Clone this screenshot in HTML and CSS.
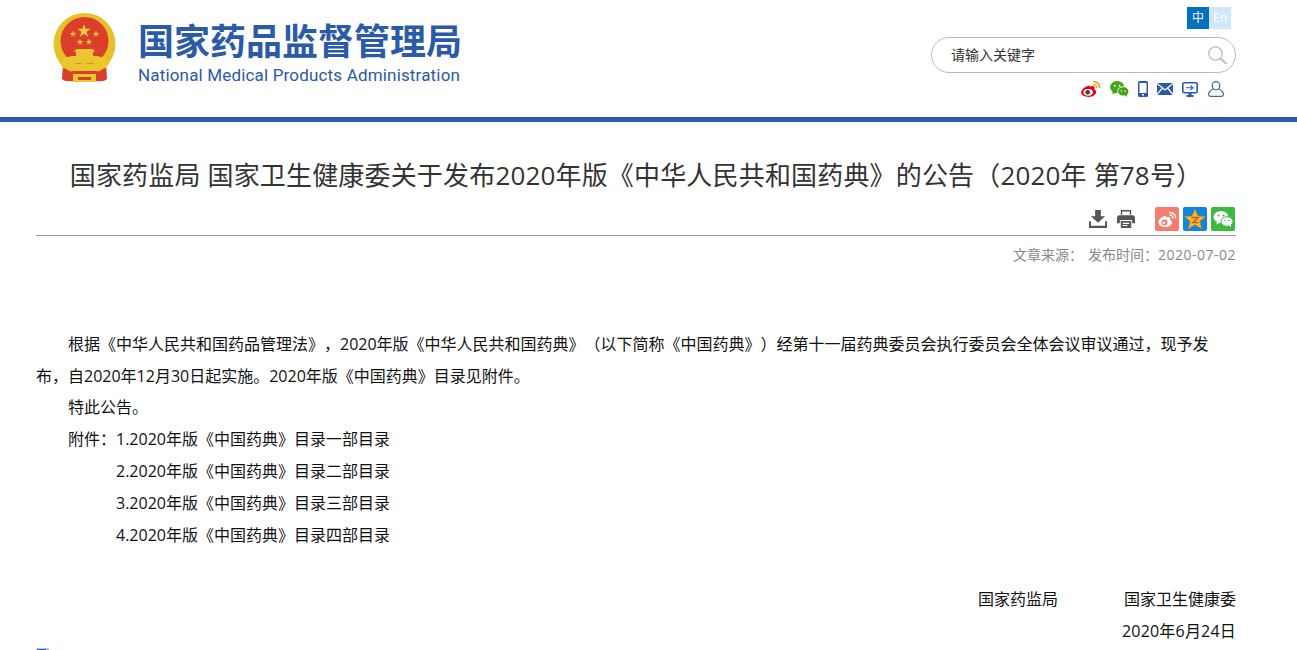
FILE: index.html
```html
<!DOCTYPE html>
<html lang="zh-CN">

<head>
    <meta charset="UTF-8">
    <title>国家药监局 国家卫生健康委关于发布2020年版《中华人民共和国药典》的公告</title>
    <link rel="stylesheet" href="styles.css">
</head>

<body>

    <header class="header">
        <div class="header-inner">
            <a class="logo" href="#">
                <svg class="emblem" width="63" height="69" viewBox="0 0 63 69">
                    <defs>
                        <polygon id="star" points="0,-1 .225,-.309 .951,-.309 .363,.118 .588,.809 0,.382 -.588,.809 -.363,.118 -.951,-.309 -.225,-.309" />
                    </defs>
                    <path d="M10 50 L9 66 Q12 69 20 68 H43 Q51 69 54 66 L53 50 Z" fill="#d8402c" />
                    <circle cx="31.500" cy="31" r="31" fill="#e6c12a" />
                    <circle cx="31.500" cy="28" r="24" fill="#db3f2b" />
                    <use href="#star" class="star" transform="translate(31 18) scale(7)" />
                    <use href="#star" class="star" transform="translate(20 21) scale(3.500)" />
                    <use href="#star" class="star" transform="translate(43 21) scale(3.500)" />
                    <use href="#star" class="star" transform="translate(27 29) scale(3.500)" />
                    <use href="#star" class="star" transform="translate(36 29) scale(3.500)" />
                    <path d="M23 36 H40 L42 39 H40 V43 H44 L53 45 V50 H10 V45 L19 43 H23 V39 H21 Z" fill="#ecc62e" />
                    <path d="M6 49 Q18 52 31.500 50 Q45 52 57 49 L53 55 Q42 58 31.500 56 Q21 58 10 55 Z" fill="#ecc62e" />
                    <path d="M14 56 Q24 52 31.500 54 Q39 52 49 56 L41 60 H22 Z" fill="#ecc62e" />
                    <path d="M12 60 L20 58 H43 L51 60 V68 H43 V62 H20 V68 H12 Z" fill="#d8402c" />
                    <rect x="20" y="61" width="23" height="8" fill="#ecc62e" />
                    <rect x="25" y="64" width="13" height="3" fill="#d8402c" />
                </svg>
                <div class="logo-text">
                    <div class="logo-cn">国家药品监督管理局</div>
                    <div class="logo-en">National Medical Products Administration</div>
                </div>
            </a>

            <div class="tools">
                <div class="lang">
                    <a class="lang-cn" href="#">中</a>
                    <a class="lang-en" href="#">En</a>
                </div>
                <div class="search">
                    <span class="search-text">请输入关键字</span>
                    <svg width="19" height="19" viewBox="0 0 19 19" fill="none" stroke="#bdbdbd">
                        <circle cx="7.500" cy="7.500" r="6.700" stroke-width="1.300" />
                        <path d="M12.500 12.500 L18.500 18" stroke-width="2" />
                    </svg>
                </div>
                <div class="quick-icons">
                    <svg width="20" height="16" viewBox="0 0 21 17">
                        <path d="M8 5 C3 6 0 10 0 12 C0 15 4 17 8 17 C13 17 16 14 16 11.500 C16 10 14.500 9.500 14 9 C15 7 14 5 11 5.500 L9 6 C9.500 4.500 9 4.500 8 5 Z" fill="#e60012" />
                        <ellipse cx="7.500" cy="12" rx="5" ry="3.600" fill="#fff" />
                        <circle cx="7" cy="12" r="2.500" fill="#444" />
                        <path d="M13 1 C17 0.500 20 3.500 19.500 7.500" fill="none" stroke="#e9a21d" stroke-width="1.800" />
                        <path d="M13 4 C15 3.700 17 5 16.500 7.500" fill="none" stroke="#e9a21d" stroke-width="1.500" />
                    </svg>
                    <svg width="19" height="16" viewBox="0 0 20 17">
                        <ellipse cx="7.500" cy="6.500" rx="7.500" ry="6.500" fill="#45a518" />
                        <path d="M3 10 L2.500 14 L7 12 Z" fill="#45a518" />
                        <ellipse cx="14" cy="11" rx="6" ry="5" fill="#45a518" stroke="#fff" stroke-width="1" />
                        <path d="M16 15 L18 17 L18 13 Z" fill="#45a518" />
                        <circle cx="5" cy="5" r="1" fill="#fff" />
                        <circle cx="10" cy="5" r="1" fill="#fff" />
                        <circle cx="12" cy="10.500" r="0.800" fill="#fff" />
                        <circle cx="16" cy="10.500" r="0.800" fill="#fff" />
                    </svg>
                    <svg width="10" height="16" viewBox="0 0 10 16">
                        <rect x="0" y="0" width="10" height="16" rx="1.500" fill="#2b5aa8" />
                        <rect x="1.500" y="2" width="7" height="10" fill="#fff" />
                        <rect x="4" y="13" width="2" height="1.500" fill="#fff" />
                    </svg>
                    <svg width="16" height="12" viewBox="0 0 16 12">
                        <rect width="16" height="12" fill="#2b5aa8" />
                        <path d="M0 0.500 L8 7 L16 0.500 M0 11.500 L5.500 5 M16 11.500 L10.500 5" fill="none" stroke="#fff" stroke-width="1.200" />
                    </svg>
                    <svg width="16" height="15" viewBox="0 0 16 15">
                        <rect x="0.800" y="0.800" width="14.400" height="10" rx="1.500" fill="none" stroke="#2b5aa8" stroke-width="1.600" />
                        <path d="M4 5.800 H11 M8.500 3.500 L11 5.800 L8.500 8" fill="none" stroke="#2b5aa8" stroke-width="1.100" />
                        <path d="M6.500 11 H9.500 V13 H11.500 V15 H4.500 V13 H6.500 Z" fill="#2b5aa8" />
                    </svg>
                    <svg class="user-icon" width="16" height="16" viewBox="0 0 17 17" fill="none" stroke="#3f64ad" stroke-width="1.300">
                        <ellipse cx="8.500" cy="5" rx="4" ry="4.300" />
                        <path d="M5.500 8.500 C2 10 0.700 12 0.700 14 C0.700 15.500 1.500 16.300 3 16.300 H14 C15.500 16.300 16.300 15.500 16.300 14 C16.300 12 15 10 11.500 8.500" />
                    </svg>
                </div>
            </div>
        </div>
    </header>

    <main class="article">
        <h1 class="article-title">国家药监局 国家卫生健康委关于发布2020年版《中华人民共和国药典》的公告（2020年 第78号）</h1>

        <div class="share">
            <svg class="share-tool" width="18" height="18" viewBox="0 0 19 19" fill="#555">
                <path d="M6.500 0 H12.500 V6.500 H17 L9.500 13.500 L2 6.500 H6.500 Z" />
                <path d="M0 12 H2 V16.700 H17 V12 H19 V19 H0 Z" />
            </svg>
            <svg class="share-tool" width="18" height="18" viewBox="0 0 19 19" fill="#555">
                <path d="M4 0 H15 V5 H13.500 V1.500 H5.500 V5 H4 Z" />
                <path d="M2.500 5.500 H16.500 Q19 5.500 19 8 V14 H16 V10.500 H3 V14 H0 V8 Q0 5.500 2.500 5.500 Z" />
                <path d="M4 11.500 H15 V19 H4 Z M6 13.500 V14.700 H13 V13.500 Z M6 15.800 V17 H11 V15.800 Z" fill-rule="evenodd" />
            </svg>
            <span class="share-gap"></span>
            <svg width="24" height="24" viewBox="0 0 24 24">
                <rect width="24" height="24" rx="2" fill="#f77c6f" />
                <path d="M10 9 C6 10 3.500 13 3.500 15.500 C3.500 18 6.500 20 10 20 C14 20 17 18 17 15.500 C17 14 16 13.500 15 13 C16 11 15 9.500 12.500 10 L11 10.500 C11.500 9 11 8.500 10 9 Z" fill="#fff" />
                <circle cx="9.500" cy="15.500" r="3" fill="#f77c6f" />
                <circle cx="9" cy="15.800" r="1.300" fill="#fff" />
                <path d="M14 5.500 C18 5 21 8 20.500 11.500 M14.500 8 C16.500 7.800 18 9.500 17.700 11.500" fill="none" stroke="#fff" stroke-width="1.400" />
            </svg>
            <svg width="24" height="24" viewBox="0 0 24 24">
                <rect width="24" height="24" rx="2" fill="#0f86dc" />
                <polygon points="12,2 15,9 22.500,9.500 16.800,14.300 18.700,21.700 12,17.800 5.300,21.700 7.200,14.300 1.500,9.500 9,9" fill="#f7b92b" stroke="#c97f1c" stroke-width="0.600" />
                <path d="M8.500 10.500 H15 L10 15.500 H15.500" fill="none" stroke="#c8601a" stroke-width="1.600" />
            </svg>
            <svg width="24" height="24" viewBox="0 0 24 24">
                <rect width="24" height="24" rx="2" fill="#3cba3e" />
                <ellipse cx="10" cy="10" rx="7.500" ry="6" fill="#fff" />
                <path d="M6 14 L5.500 17.500 L9.500 15.500 Z" fill="#fff" />
                <ellipse cx="16" cy="14.500" rx="6" ry="4.800" fill="#fff" stroke="#3cba3e" />
                <path d="M18.500 18 L20 20.500 L20 16.500 Z" fill="#fff" />
                <circle cx="7.500" cy="8.500" r="1" fill="#3cba3e" />
                <circle cx="12.500" cy="8.500" r="1" fill="#3cba3e" />
                <circle cx="14" cy="13.500" r="0.800" fill="#3cba3e" />
                <circle cx="18" cy="13.500" r="0.800" fill="#3cba3e" />
            </svg>
        </div>

        <div class="meta">
            <span>文章来源：</span>
            <span>发布时间：<span class="date">2020-07-02</span></span>
        </div>

        <div class="article-body">
            <p class="indent para-two">根据《中华人民共和国药品管理法》，2020年版《中华人民共和国药典》（以下简称《中国药典》）经第十一届药典委员会执行委员会全体会议审议通过，现予发布，自2020年12月30日起实施。2020年版《中国药典》目录见附件。</p>
            <p class="indent line">特此公告。</p>
            <p class="indent line">附件：1.2020年版《中国药典》目录一部目录</p>
            <p class="attach line">2.2020年版《中国药典》目录二部目录</p>
            <p class="attach line">3.2020年版《中国药典》目录三部目录</p>
            <p class="attach line">4.2020年版《中国药典》目录四部目录</p>
            <p class="line"></p>
            <p class="sign line"><span>国家药监局</span><span>国家卫生健康委</span></p>
            <p class="sign line sign-date">2020年6月24日</p>
            <svg class="file-icon" width="16" height="16" viewBox="0 0 16 16">
                <path d="M1 2 H12 L15 5 V16 H1 Z" fill="#fff" stroke="#6f8fd8" />
                <path d="M1 2 H10 V4 H1 Z" fill="#2b5ac0" />
            </svg>
        </div>
    </main>

</body>

</html>
```

FILE: styles.css
```css
/* General Reset */
* {
    box-sizing: border-box;
}

html,
body {
    height: 650px;
    overflow: hidden;
}

body {
    margin: 0;
    background: #fff;
    color: #333;
    font-family: "Open Sans", "Noto Sans CJK SC", sans-serif;
    text-spacing-trim: space-all;
}

a {
    text-decoration: none;
}

/* Header */
.header {
    height: 122px;
    border-bottom: 5px solid #2b5aa8;
}

.header-inner {
    width: 1200px;
    height: 117px;
    margin-left: 36px;
    display: flex;
    justify-content: space-between;
}

.logo {
    display: flex;
    padding: 13px 0 0 17px;
    gap: 22px;
}

.star {
    fill: #f3d03e;
}

.logo-text {
    padding-top: 4px;
}

.logo-cn {
    font-family: "Noto Sans CJK SC", sans-serif;
    font-weight: 700;
    font-size: 36px;
    line-height: 44px;
    color: #2b5aa8;
    white-space: nowrap;
}

.logo-en {
    font-family: "Roboto", sans-serif;
    font-size: 17px;
    line-height: 20px;
    margin-top: 4px;
    letter-spacing: 0.17px;
    color: #2b5aa8;
    white-space: nowrap;
}

.tools {
    width: 305px;
    display: flex;
    flex-direction: column;
    align-items: flex-end;
    padding-top: 7px;
}

.lang {
    display: flex;
    margin-right: 5px;
    font-size: 12px;
    line-height: 22px;
    text-align: center;
}

.lang a {
    width: 22px;
    height: 22px;
    color: #fff;
}

.lang-cn {
    background: #0070c0;
}

.lang-en {
    background: #cfe8ff;
}

.search {
    width: 305px;
    height: 36px;
    margin-top: 8px;
    padding: 0 8px 0 19px;
    border: 1px solid #bbb;
    border-radius: 18px;
    display: flex;
    justify-content: space-between;
    align-items: center;
}

.search-text {
    font-size: 14px;
    margin-bottom: 2px;
    color: #333;
}

.quick-icons {
    display: flex;
    align-items: center;
    gap: 9px;
    margin-top: 8px;
    margin-right: 12px;
}

.user-icon {
    margin-left: 1px;
}

/* Article */
.article {
    width: 1200px;
    margin-left: 36px;
}

.article-title {
    margin: 0;
    padding-top: 33px;
    font-size: 26px;
    font-weight: 400;
    line-height: 41px;
    letter-spacing: 0.17px;
    text-align: center;
    color: #333;
}

.share {
    display: flex;
    justify-content: flex-end;
    align-items: center;
    gap: 4px;
    height: 40px;
    padding: 11px 1px 4px 0;
    border-bottom: 1px solid #999;
}

.share-tool {
    margin-right: 6px;
}

.share-gap {
    width: 6px;
}

.meta {
    display: flex;
    justify-content: flex-end;
    gap: 5px;
    margin-top: 9px;
    font-size: 14px;
    line-height: 20px;
    color: #888;
}

.date {
    letter-spacing: 0.5px;
}

.article-body {
    padding-top: 63px;
    font-size: 16px;
    line-height: 31px;
    color: #111;
}

.article-body p {
    margin: 0;
}

.line {
    height: 32px;
}

.article-body .para-two {
    height: 64px;
    line-height: 32px;
}

.indent {
    text-indent: 32px;
}

.attach {
    padding-left: 80px;
}

.sign {
    display: flex;
    justify-content: flex-end;
    gap: 66px;
}

.sign-date {
    letter-spacing: 0.2px;
}

.file-icon {
    display: block;
    margin-top: -1px;
}
```
